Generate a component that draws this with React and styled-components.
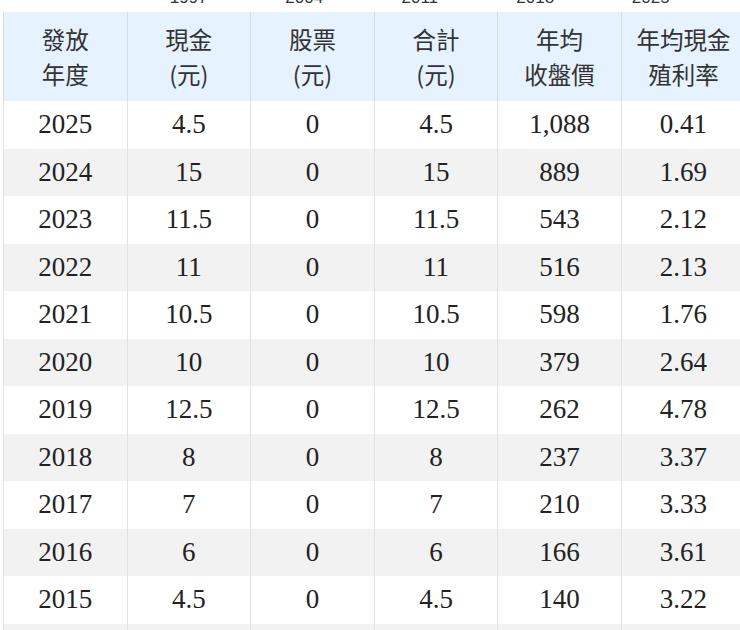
import React from "react";
import styled, { createGlobalStyle } from "styled-components";

const GlobalStyle = createGlobalStyle`
  html, body {
    margin: 0;
    padding: 0;
    background: #fff;
    overflow: hidden;
  }
`;

const Page = styled.div`
  width: 740px;
  height: 630px;
  overflow: hidden;
`;

const AxisRow = styled.div`
  display: flex;
  height: 12px;
  padding-left: 131px;
  overflow: hidden;
`;

const AxisLabel = styled.span`
  flex: 0 0 115.5px;
  margin-top: -12px;
  height: 20px;
  line-height: 20px;
  text-align: center;
  font-family: "Liberation Sans", Arial, sans-serif;
  font-size: 17px;
  color: #333;
`;

const Table = styled.table`
  margin-left: 3px;
  width: 742px;
  border-collapse: collapse;
  table-layout: fixed;
`;

const HeadCell = styled.th`
  height: 89px;
  padding: 0;
  background: #e6f2fd;
  border-left: 1px solid #d8dde3;
  font-family: "Noto Sans CJK TC", "Noto Sans", sans-serif;
  font-weight: 400;
  font-size: 23.5px;
  line-height: 35px;
  color: #333;
  text-align: center;
  vertical-align: middle;
`;

const Row = styled.tr`
  height: 47.5px;
  background: ${(props) => (props.$striped ? "#f2f2f2" : "#fff")};
`;

const Cell = styled.td`
  padding: 0;
  border-left: 1px solid #e2e2e2;
  font-family: "Liberation Serif", "Times New Roman", serif;
  font-size: 27px;
  color: #222;
  text-align: center;
  vertical-align: middle;
`;

const axisYears = ["1997", "2004", "2011", "2018", "2025"];

const headers = [
  ["發放", "年度"],
  ["現金", "(元)"],
  ["股票", "(元)"],
  ["合計", "(元)"],
  ["年均", "收盤價"],
  ["年均現金", "殖利率"],
];

const rows = [
  ["2025", "4.5", "0", "4.5", "1,088", "0.41"],
  ["2024", "15", "0", "15", "889", "1.69"],
  ["2023", "11.5", "0", "11.5", "543", "2.12"],
  ["2022", "11", "0", "11", "516", "2.13"],
  ["2021", "10.5", "0", "10.5", "598", "1.76"],
  ["2020", "10", "0", "10", "379", "2.64"],
  ["2019", "12.5", "0", "12.5", "262", "4.78"],
  ["2018", "8", "0", "8", "237", "3.37"],
  ["2017", "7", "0", "7", "210", "3.33"],
  ["2016", "6", "0", "6", "166", "3.61"],
  ["2015", "4.5", "0", "4.5", "140", "3.22"],
  ["2014", "", "", "", "", ""],
];

const App = () => {
  return (
    <>
      <GlobalStyle />
      <Page>
        <AxisRow>
          {axisYears.map((year) => (
            <AxisLabel key={year}>{year}</AxisLabel>
          ))}
        </AxisRow>
        <Table>
          <thead>
            <tr>
              {headers.map(([top, bottom]) => (
                <HeadCell key={top + bottom}>
                  {top}
                  <br />
                  {bottom}
                </HeadCell>
              ))}
            </tr>
          </thead>
          <tbody>
            {rows.map((row, index) => (
              <Row key={row[0]} $striped={index % 2 === 1}>
                {row.map((value, i) => (
                  <Cell key={i}>{value}</Cell>
                ))}
              </Row>
            ))}
          </tbody>
        </Table>
      </Page>
    </>
  );
};

export default App;
